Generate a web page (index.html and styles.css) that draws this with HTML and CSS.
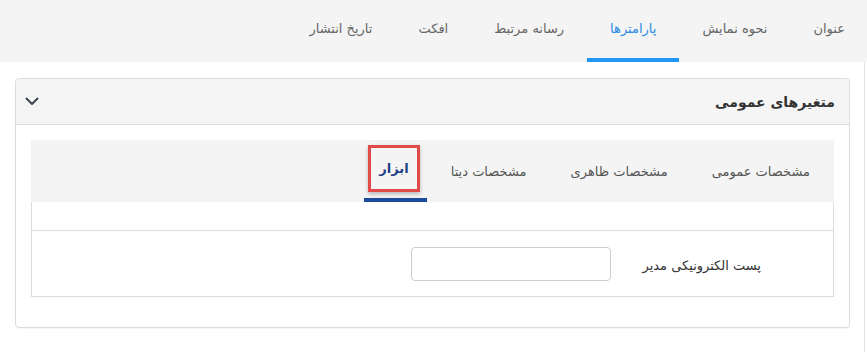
FILE: index.html
```html
<!DOCTYPE html>
<html lang="fa" dir="rtl">
<head>
<meta charset="utf-8">
<link rel="stylesheet" href="styles.css">
</head>
<body>
<nav class="topnav">
  <a class="ttab">عنوان</a>
  <a class="ttab">نحوه نمایش</a>
  <a class="ttab active">پارامترها</a>
  <a class="ttab">رسانه مرتبط</a>
  <a class="ttab">افکت</a>
  <a class="ttab">تاریخ انتشار</a>
</nav>
<main class="main">
  <section class="panel">
    <header class="panel-head">
      <h2 class="panel-title">متغیرهای عمومی</h2>
      <svg class="chev" width="14" height="9" viewBox="0 0 14 9"><path d="M1.5 1.5 L7 7 L12.5 1.5" fill="none" stroke="#3c4250" stroke-width="2" stroke-linecap="round" stroke-linejoin="round"/></svg>
    </header>
    <div class="panel-body">
      <div class="itabs">
        <a class="itab">مشخصات عمومی</a>
        <a class="itab">مشخصات ظاهری</a>
        <a class="itab">مشخصات دیتا</a>
        <a class="itab active"><span class="mark">ابزار</span></a>
      </div>
      <div class="tab-content">
        <div class="content-top"></div>
        <div class="form-box">
          <div class="form-row">
            <label class="flabel">پست الکترونیکی مدیر</label>
            <input class="finput" type="text">
          </div>
        </div>
      </div>
    </div>
  </section>
</main>
</body>
</html>
```
FILE: styles.css
```css
* { box-sizing: border-box; }
html, body { margin: 0; padding: 0; background: #fff; }
body {
  font-family: "DejaVu Sans", "Noto Sans", sans-serif;
  font-size: 13px;
  color: #555;
  width: 867px;
  height: 352px;
  overflow: hidden;
}
.topnav {
  display: flex;
  height: 62px;
  background: #f4f4f4;
}
.ttab {
  display: flex;
  align-items: center;
  padding: 0 23px 6px;
  color: #666;
  white-space: nowrap;
}
.ttab:first-child { padding-right: 22px; }
.ttab.active {
  color: #2a8ce6;
  border-bottom: 4px solid #2196f3;
  padding-bottom: 2px;
}

.main {
  height: 290px;
  padding: 16px 17px 0 15px;
  position: relative;
}
.main::after {
  content: "";
  position: absolute;
  top: 0; bottom: 0;
  left: 864px;
  width: 1px;
  background: #e2e2e2;
}
.panel {
  width: 835px;
  border: 1px solid #dcdcdc;
  border-radius: 4px;
  height: 250px;
  box-shadow: 0 1px 1px rgba(0,0,0,0.04);
}
.panel-head {
  display: flex;
  align-items: center;
  justify-content: space-between;
  height: 46px;
  background: #f5f5f5;
  border-bottom: 1px solid #dcdcdc;
  border-radius: 4px 4px 0 0;
  padding: 0 14px 0 9px;
}
.panel-title {
  margin: 0;
  font-size: 14px;
  font-weight: bold;
  color: #333;
}
.chev { display: block; }
.panel-body {
  padding: 15px 15px 0;
}
.itabs {
  display: flex;
  height: 62px;
  background: #f4f4f4;
  padding-right: 9px;
}
.itab {
  display: flex;
  align-items: center;
  padding: 0 15px;
  margin: 0 7px;
  color: #555;
  white-space: nowrap;
}
.itab:first-child { margin-right: 0; }
.itab.active {
  align-items: flex-start;
  color: #1d3f86;
  font-weight: bold;
  border-bottom: 4px solid #1b4b9c;
  padding: 5px 7px 0 4px;
  margin: 0 2px 0 0;
}
.mark {
  display: block;
  border: 3px solid #e24a4a;
  padding: 13px 8px;
  box-shadow: 0 2px 4px rgba(0,0,0,0.25);
  line-height: 15px;
}
.tab-content {
  border-left: 1px solid #dcdcdc;
  border-right: 1px solid #dcdcdc;
}
.content-top {
  height: 29px;
  border-bottom: 1px solid #dcdcdc;
}
.form-box {
  height: 66px;
  border-bottom: 1px solid #dcdcdc;
  display: flex;
  align-items: center;
}
.form-row {
  display: flex;
  align-items: center;
  padding-right: 72px;
}
.flabel {
  color: #333;
  font-size: 13px;
  width: 150px;
  padding-top: 3px;
}
.finput {
  width: 200px;
  height: 34px;
  border: 1px solid #ccc;
  border-radius: 4px;
  background: #fff;
}
```
